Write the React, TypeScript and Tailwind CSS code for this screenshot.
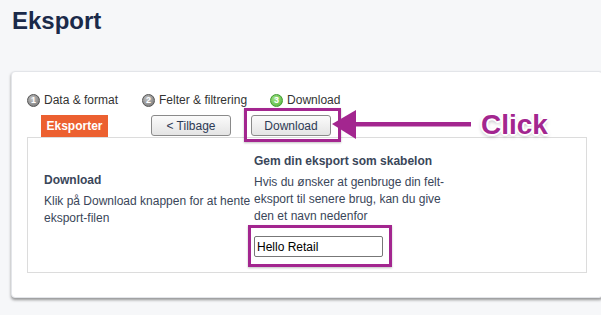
import React from 'react';

function StepIcon({ n, green }: { n: number; green?: boolean }) {
  return (
    <span
      className={
        green
          ? 'flex h-[13px] w-[13px] items-center justify-center rounded-full border border-[#3f9a30] bg-[radial-gradient(circle_at_40%_35%,#a6e68a,#4caf38)] text-[9px] font-bold leading-none text-white'
          : 'flex h-[13px] w-[13px] items-center justify-center rounded-full border border-[#555] bg-[radial-gradient(circle_at_40%_35%,#c4c4c4,#6e6e6e)] text-[9px] font-bold leading-none text-white'
      }
    >
      {n}
    </span>
  );
}

function Step({ n, label, green }: { n: number; label: string; green?: boolean }) {
  return (
    <div className="flex items-center gap-[4px]">
      <StepIcon n={n} green={green} />
      <span className="text-[12px] leading-[18px] text-[#333]">{label}</span>
    </div>
  );
}

export default function App() {
  return (
    <div className="relative h-[315px] w-[601px] overflow-hidden bg-[#f6f7f9] font-['Liberation_Sans',Arial,sans-serif]">
      <h1 className="pl-[12px] pt-[7px] text-[24px] font-bold leading-[28px] text-[#1b2a4a]">Eksport</h1>

      {/* Card */}
      <div className="ml-[11px] mt-[36px] w-[592px] rounded-[4px] border border-[#e3e5e9] bg-white px-[15px] pb-[24px] pt-[19px] shadow-[0_2px_3px_rgba(0,0,0,0.4)]">
        <div className="flex items-center">
          <Step n={1} label="Data & format" />
          <div className="ml-[24px]">
            <Step n={2} label="Felter & filtrering" />
          </div>
          <div className="ml-[23px]">
            <Step n={3} label="Download" green />
          </div>
        </div>

        <div className="mt-[6px] flex items-start pl-[14px]">
          <div className="flex h-[22px] w-[67px] items-center justify-center bg-[#ec6030] text-[12px] font-bold text-white">
            Eksporter
          </div>
          <button className="ml-[43px] h-[21px] w-[80px] rounded-[3px] border border-[#8a8a8a] bg-[linear-gradient(#fbfbfb,#e4e4e4)] text-[12px] text-[#2d3a55]">
            &lt; Tilbage
          </button>
          <button className="ml-[20px] h-[21px] w-[80px] rounded-[3px] border border-[#8a8a8a] bg-[linear-gradient(#fbfbfb,#e4e4e4)] text-[12px] text-[#2d3a55]">
            Download
          </button>
        </div>

        {/* Panel */}
        <div className="flex w-[560px] border border-[#dcdcdc] pb-[15px] pl-[16px] pt-[14px] text-[12px] text-[#3a4659]">
          <div className="w-[210px] pt-[19px]">
            <div className="font-bold leading-[18px]">Download</div>
            <p className="mt-[4px] leading-[17px]">Klik på Download knappen for at hente eksport-filen</p>
          </div>
          <div className="w-[200px]">
            <div className="font-bold leading-[18px]">Gem din eksport som skabelon</div>
            <p className="mt-[4px] leading-[17px]">
              Hvis du ønsker at genbruge din felt-eksport til senere brug, kan du give den et navn nedenfor
            </p>
            <input
              readOnly
              value="Hello Retail"
              className="mt-[11px] h-[21px] w-[129px] rounded-[2px] border border-[#777] px-[2px] text-[12px] text-black outline-none"
            />
          </div>
        </div>
      </div>

      {/* Annotations */}
      <div className="absolute left-[244px] top-[108px] h-[34px] w-[97px] border-[3px] border-[#a3268f] shadow-[0_1px_2px_rgba(0,0,0,0.25)]" />
      <div className="absolute left-[248px] top-[225px] h-[42px] w-[144px] border-[3px] border-[#a3268f] shadow-[0_1px_2px_rgba(0,0,0,0.25)]" />
      <svg className="absolute left-[330px] top-[105px]" width="145" height="40" viewBox="0 0 145 40">
        <polygon points="2,19 26,5 26,34" fill="#a3268f" />
        <rect x="24" y="17" width="117" height="4.5" fill="#a3268f" />
      </svg>
      <div className="absolute left-[481px] top-[109px] text-[28px] font-bold leading-[32px] text-[#a3268f] [text-shadow:0_0_1px_#fff,2px_0_0_#fff,-2px_0_0_#fff,0_2px_0_#fff,0_-2px_0_#fff,1px_1px_0_#fff,-1px_-1px_0_#fff,1px_-1px_0_#fff,-1px_1px_0_#fff,0_2px_4px_rgba(0,0,0,0.35)]">
        Click
      </div>
    </div>
  );
}
